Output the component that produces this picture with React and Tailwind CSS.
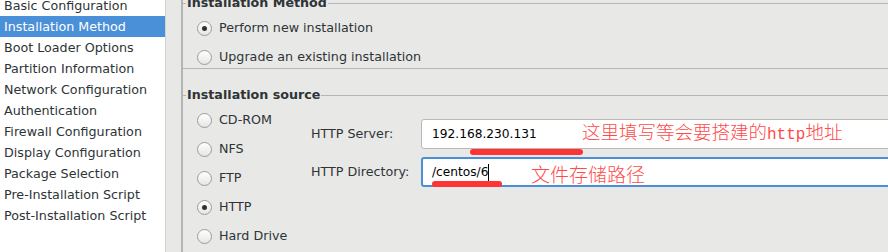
import React from 'react';

const sections = [
  'Basic Configuration',
  'Installation Method',
  'Boot Loader Options',
  'Partition Information',
  'Network Configuration',
  'Authentication',
  'Firewall Configuration',
  'Display Configuration',
  'Package Selection',
  'Pre-Installation Script',
  'Post-Installation Script',
];

const sources = ['CD-ROM', 'NFS', 'FTP', 'HTTP', 'Hard Drive'];

const Radio = ({ label, checked }) => (
  <div className="h-[20px] flex items-center gap-[7px]">
    <span className="w-[15px] h-[15px] rounded-full border border-[#9c9c9a] bg-gradient-to-b from-white to-[#e6e6e4] flex items-center justify-center shrink-0">
      {checked && <span className="w-[5px] h-[5px] rounded-full bg-[#2e3436]" />}
    </span>
    <span className="text-[#2e3436] whitespace-nowrap">{label}</span>
  </div>
);

const Legend = ({ children, className = '' }) => (
  <div className={`h-[16px] flex items-center ${className}`}>
    <span className="w-[3px] h-px bg-[#b5b5b3]" />
    <span className="font-bold text-[#2e3436] px-px whitespace-nowrap">{children}</span>
    <span className="flex-1 h-px bg-[#b5b5b3]" />
  </div>
);

const App = () => {
  const selected = 'Installation Method';

  return (
    <div className="relative w-[888px] h-[252px] overflow-hidden flex bg-[#e8e8e7] font-['DejaVu_Sans','Liberation_Sans',sans-serif] text-[12.7px] leading-[16px]">
      {/* Sidebar */}
      <aside className="w-[166px] shrink-0 bg-white border-r border-[#d2d2d0]">
        <ul className="-mt-[5px]">
          {sections.map(s => (
            <li
              key={s}
              className={`h-[21px] pl-[4px] flex items-center whitespace-nowrap ${s === selected ? 'bg-[#4a90d9] text-white' : 'text-[#2e3436]'}`}
            >
              {s}
            </li>
          ))}
        </ul>
      </aside>

      {/* Main pane */}
      <main className="flex-1 ml-[15px] border-l-2 border-[#b5b5b3] min-w-0">
        {/* Installation Method */}
        <section className="border-b border-[#b5b5b3] pb-[1px]">
          <Legend className="-mt-[5px]">Installation Method</Legend>
          <div className="pl-[14px] pt-[7px] flex flex-col gap-[9px]">
            <Radio label="Perform new installation" checked />
            <Radio label="Upgrade an existing installation" />
          </div>
        </section>

        {/* Installation source */}
        <section className="mt-[18px]">
          <Legend>Installation source</Legend>
          <div className="flex pt-[6px]">
            <div className="w-[128px] shrink-0 pl-[14px] pt-px flex flex-col gap-[9px]">
              {sources.map(s => (
                <Radio key={s} label={s} checked={s === 'HTTP'} />
              ))}
            </div>
            <div className="mt-[10px] flex flex-col gap-[8px]">
              <div className="flex items-center">
                <span className="w-[110px] text-[#2e3436]">HTTP Server:</span>
                <div className="w-[480px] h-[30px] bg-white border border-[#b8b8b6] rounded-[3px] flex items-center pl-[10px] text-[12.2px] text-black">
                  192.168.230.131
                </div>
              </div>
              <div className="flex items-center">
                <span className="w-[110px] text-[#2e3436]">HTTP Directory:</span>
                <div className="w-[480px] h-[30px] bg-white border-2 border-[#4a90d9] rounded-[3px] flex items-center pl-[9px] text-[12.2px] text-black">
                  /centos/6
                  <span className="w-px h-[17px] bg-black" />
                </div>
              </div>
            </div>
          </div>
        </section>
      </main>

      {/* Hand-drawn annotations */}
      <span className="absolute left-[470px] top-[149px] w-[113px] h-[6px] rounded-full bg-[#ff3434]" />
      <span className="absolute left-[432px] top-[181px] w-[70px] h-[6px] rounded-full bg-[#ff3434]" />
      <span className="absolute left-[582px] top-[122px] text-[18.5px] leading-[19px] text-[#ff4a4a] whitespace-nowrap font-['Noto_Sans_CJK_SC',sans-serif] font-light">
        这里填写等会要搭建的<span className="font-['Liberation_Mono',monospace] text-[16px]">http</span>地址
      </span>
      <span className="absolute left-[531px] top-[164px] text-[19px] leading-[19px] text-[#ff4a4a] whitespace-nowrap font-['Noto_Sans_CJK_SC',sans-serif] font-light">
        文件存储路径
      </span>
    </div>
  );
};

export default App;
